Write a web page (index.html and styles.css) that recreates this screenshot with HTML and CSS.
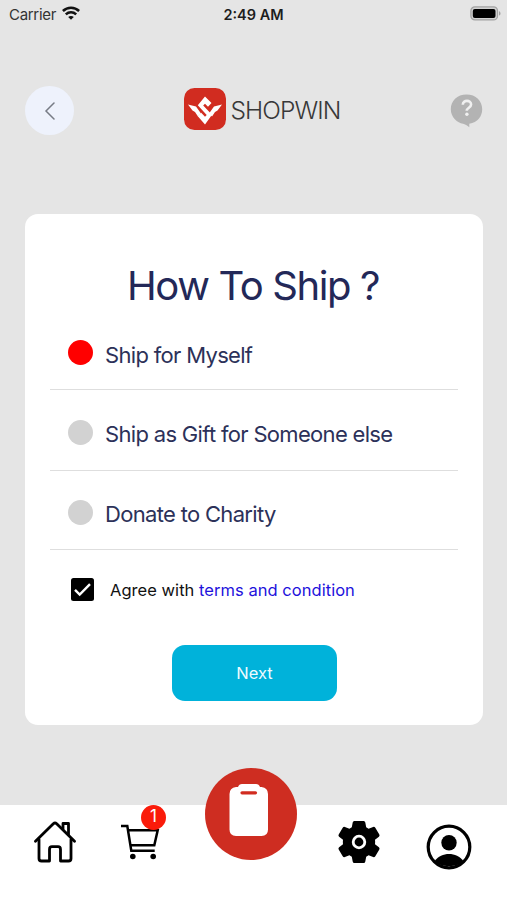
FILE: index.html
```html
<!DOCTYPE html>
<html lang="en">
<head>
<meta charset="utf-8">
<meta name="viewport" content="width=device-width, initial-scale=1">
<title>Shopwin</title>
<link rel="stylesheet" href="styles.css">
</head>
<body>
<div class="screen">
  <div class="status">
    <div class="status-left">
      <span class="carrier">Carrier</span>
      <svg class="wifi" width="18" height="14" viewBox="0 0 18 14" fill="none" stroke="#111" stroke-width="2.5">
        <path d="M.9 5C5.5.5 12.500.5 17.100 5"/><path d="M3.800 8.300C6.800 5.500 11.200 5.500 14.200 8.300"/>
        <path d="M9 13.800 6.200 11C7.800 9.600 10.200 9.600 11.800 11z" fill="#111" stroke="none"/>
      </svg>
    </div>
    <span class="clock">2:49 AM</span>
    <div class="status-right">
      <svg width="31" height="15" viewBox="0 0 31 15">
        <rect x=".9" y=".9" width="26.600" height="13" rx="4" fill="#d2d2d2" stroke="#a2a2a2" stroke-width="1.300"/>
        <rect x="2.800" y="2.900" width="22.700" height="9" rx="2" fill="#000"/>
        <path d="M29 5.200c2 .7 2 3.700 0 4.400z" fill="#a2a2a2"/>
      </svg>
    </div>
  </div>

  <header class="header">
    <button class="back" aria-label="Back">
      <svg width="12" height="18" viewBox="0 0 12 18" fill="none" stroke="#777b85" stroke-width="1.500" stroke-linecap="round"><path d="M10 1 2 9l8 8"/></svg>
    </button>
    <div class="brand">
      <svg width="42" height="42" viewBox="0 0 42 42">
        <rect width="42" height="42" rx="10.500" fill="#d12c20"/>
        <path d="M4 16.500 12 18.500 17 25.500 14 28.500 11 24 8.500 22.500z" fill="#fff"/>
        <path d="M38 16.500 30 18.500 25 25.500 28 28.500 31 24 33.500 22.500z" fill="#fff"/>
        <path d="M21 8.500 27.500 15 24 18.800 21 15.700 19.200 17.500 28 26.800 21 36.500 13.800 28.300 17.200 24.800 21 28.800 22.700 27 13.800 17.300z" fill="#fff"/>
      </svg>
      <span class="brand-name">SHOPWIN</span>
    </div>
    <svg class="help" width="33" height="34" viewBox="0 0 33 34">
      <path d="M16.500.5C7 .5.800 6.800.800 15.300c0 8.200 6.700 13.700 12.200 14.500 2 .3 4.200 1.700 6.300 3.500v-3.500C27.500 28.500 32.200 22.500 32.200 15.300 32.200 6.800 26 .5 16.500.5z" fill="#b3b3b3"/>
      <path d="M12.800 10.700c0-5.200 8.300-5 8.300-.2 0 3.200-4.400 3.200-4.400 6.300" fill="none" stroke="#f0f0f0" stroke-width="2.600"/>
      <circle cx="16.900" cy="20.200" r="1.700" fill="#f0f0f0"/>
    </svg>
  </header>

  <main class="card">
    <h1 class="title">How To Ship ?</h1>
    <div class="options">
      <div class="option"><span class="dot dot-on"></span><span class="label">Ship for Myself</span></div>
      <div class="option"><span class="dot"></span><span class="label">Ship as Gift for Someone else</span></div>
      <div class="option option-last"><span class="dot"></span><span class="label">Donate to Charity</span></div>
    </div>
    <div class="agree">
      <svg width="23" height="23" viewBox="0 0 23 23"><rect width="23" height="23" rx="2.500" fill="#000"/><path d="M4 11.800 8.700 16.500 19 6.200" fill="none" stroke="#fff" stroke-width="2.400"/></svg>
      <span class="agree-text">Agree with <a class="terms">terms and condition</a></span>
    </div>
    <button class="next">Next</button>
  </main>

  <nav class="nav">
    <svg class="home" width="42" height="42" viewBox="0 0 42 42" fill="none" stroke="#000" stroke-width="2.800" stroke-linejoin="round" stroke-linecap="round">
      <path d="M1.500 20.200 19.300 2.700Q21 1.200 22.700 2.700L40.500 20.200"/>
      <path d="M5 18.500V37.500Q5 40 7.500 40H15.500V28.500Q15.500 25.700 18 25.700H24Q26.500 25.700 26.500 28.500V40H34.500Q37 40 37 37.500V18.500"/>
      <path d="M29 8V2.500H34.500V13.500"/>
    </svg>
    <div class="cart">
      <svg width="39" height="36" viewBox="0 0 39 36" fill="none" stroke="#000" stroke-width="2.500">
        <path d="M0 2H6.300L10.300 26.700H33.700M7.200 6.300H36.700L33.300 21.200H9.500"/>
        <circle cx="11.800" cy="32.500" r="2.800" fill="#000" stroke="none"/><circle cx="32.200" cy="32.500" r="2.800" fill="#000" stroke="none"/>
      </svg>
      <span class="badge">1</span>
    </div>
    <button class="orders" aria-label="Orders">
      <svg width="40" height="52" viewBox="0 0 40 52">
        <path d="M7 3H9Q10 0 13 0H27Q30 0 31 3H32.500Q39 4 39 10V45.500Q39 52 32.500 52H7Q.500 52 .500 45.500V10Q.500 4 7 3z" fill="#fff"/>
        <path d="M13 8.800H26.500" stroke="#d12c20" stroke-width="3.200" stroke-linecap="round"/>
      </svg>
    </button>
    <svg class="gear" width="42" height="42" viewBox="0 0 42 42">
      <path d="M14.700 1.500Q14.900 0 16.400 0H25.600Q27.100 0 27.300 1.500L28.200 6.300Q29.400 7 30.600 7.800L35.100 5.900Q36.500 5.400 37.300 6.700L41.300 13.600Q42 14.900 40.900 15.800L37 18.800Q37.300 21 37 23.200L40.900 26.200Q42 27.100 41.300 28.400L37.300 35.300Q36.500 36.600 35.100 36.100L30.600 34.200Q29.400 35 28.200 35.700L27.300 40.500Q27.100 42 25.600 42H16.400Q14.900 42 14.700 40.500L13.800 35.700Q12.600 35 11.400 34.200L6.900 36.100Q5.500 36.600 4.700 35.300L.700 28.400Q0 27.100 1.100 26.200L5 23.200Q4.700 21 5 18.800L1.100 15.800Q0 14.900.700 13.600L4.700 6.700Q5.500 5.400 6.900 5.900L11.400 7.800Q12.600 7 13.800 6.300z"/>
      <circle cx="21" cy="21" r="5.800" fill="#000" stroke="#fff" stroke-width="2.800"/>
    </svg>
    <svg class="profile" width="46" height="46" viewBox="0 0 46 46">
      <circle cx="23" cy="23" r="20.800" fill="#fff" stroke="#000" stroke-width="3.200"/>
      <circle cx="23" cy="18.700" r="7.700"/>
      <path d="M8.500 37.200C12 32.500 17.500 30 23 30S34 32.500 37.500 37.200C33 43.500 13 43.500 8.500 37.200z"/>
    </svg>
  </nav>
</div>
</body>
</html>
```
FILE: styles.css
```css
* { box-sizing: border-box; }
body {
  margin: 0;
  background: #e5e5e5;
  font-family: Inter, "Liberation Sans", sans-serif;
}
button { border: 0; padding: 0; font: inherit; }
svg { display: block; flex: none; }

.screen {
  width: 507px;
  height: 900px;
  display: flex;
  flex-direction: column;
  overflow: hidden;
  white-space: nowrap;
}

.status {
  height: 28px;
  display: grid;
  grid-template-columns: 1fr auto 1fr;
  align-items: center;
  padding: 0 6px 0 9px;
  font-size: 15px;
  color: #1d1d1d;
}
.status-left { display: flex; align-items: center; gap: 6px; }
.wifi { margin-bottom: 2px; }
.carrier { color: #333; letter-spacing: -0.3px; }
.clock { font-weight: 600; font-size: 14.5px; margin-right: 3px; }
.status-right { display: flex; justify-content: flex-end; padding-bottom: 1px; }

.header {
  height: 49px;
  margin: 58px 24px 0 25px;
  display: flex;
  align-items: center;
  justify-content: space-between;
}
.back {
  width: 49px;
  height: 49px;
  border-radius: 50%;
  background: #eef2fc;
  display: flex;
  align-items: center;
  justify-content: center;
}
.brand { display: flex; align-items: center; gap: 5px; margin: 0 0 3px 0; }
.brand-name { font-size: 24.5px; color: #383838; letter-spacing: -0.9px; font-weight: 350; padding-top: 2px; }

.card {
  width: 458px;
  height: 511px;
  margin: 79px 0 0 25px;
  padding: 46px 25px 0;
  border-radius: 13px;
  background: #fff;
  display: flex;
  flex-direction: column;
}
.title {
  margin: 0 2px 0 0;
  text-align: center;
  font-size: 40px;
  line-height: 52px;
  font-weight: 400;
  letter-spacing: -1.4px;
  color: #232858;
}
.option {
  height: 81px;
  padding: 4px 0 0 18px;
  border-bottom: 1.500px solid #dedede;
  display: flex;
  align-items: center;
  gap: 12px;
}
.option:first-child { height: 78px; padding-top: 4px; }
.option-last { height: 79px; padding-top: 4px; }
.dot { width: 25px; height: 25px; border-radius: 50%; background: #d2d2d2; }
.dot-on { background: #f00; }
.label {
  font-size: 22px;
  line-height: 28px;
  letter-spacing: -0.68px;
  margin-top: 4px;
  color: #2c3159;
}
.agree {
  display: flex;
  align-items: center;
  gap: 16px;
  margin: 28px 0 0 21px;
  height: 23px;
}
.agree-text { font-size: 16.5px; letter-spacing: 0.04px; color: #111; }
.terms { color: #1e12dc; }
.next {
  width: 165px;
  height: 56px;
  margin: 44px 0 0 122px;
  border-radius: 13px;
  background: #00b2da;
  color: #effbff;
  font-size: 16.5px;
}

.nav {
  height: 95px;
  margin-top: 80px;
  background: #fff;
  display: flex;
  align-items: flex-start;
}
.home { margin: 16px 0 0 34px; }
.cart { position: relative; margin: 19px 0 0 45px; width: 39px; }
.badge {
  position: absolute;
  left: 20px;
  top: -19px;
  width: 25px;
  height: 25px;
  border-radius: 50%;
  background: #fa1b0a;
  color: #fff;
  font-size: 17px;
  line-height: 23px;
  text-align: center;
}
.orders {
  width: 92px;
  height: 92px;
  margin: -37px 0 0 45px;
  border-radius: 50%;
  background: #ce2d21;
  display: flex;
  justify-content: center;
  padding: 16px 4px 0 0;
}
.gear { margin: 16px 0 0 41px; }
.profile { margin: 19px 0 0 46px; }
```
